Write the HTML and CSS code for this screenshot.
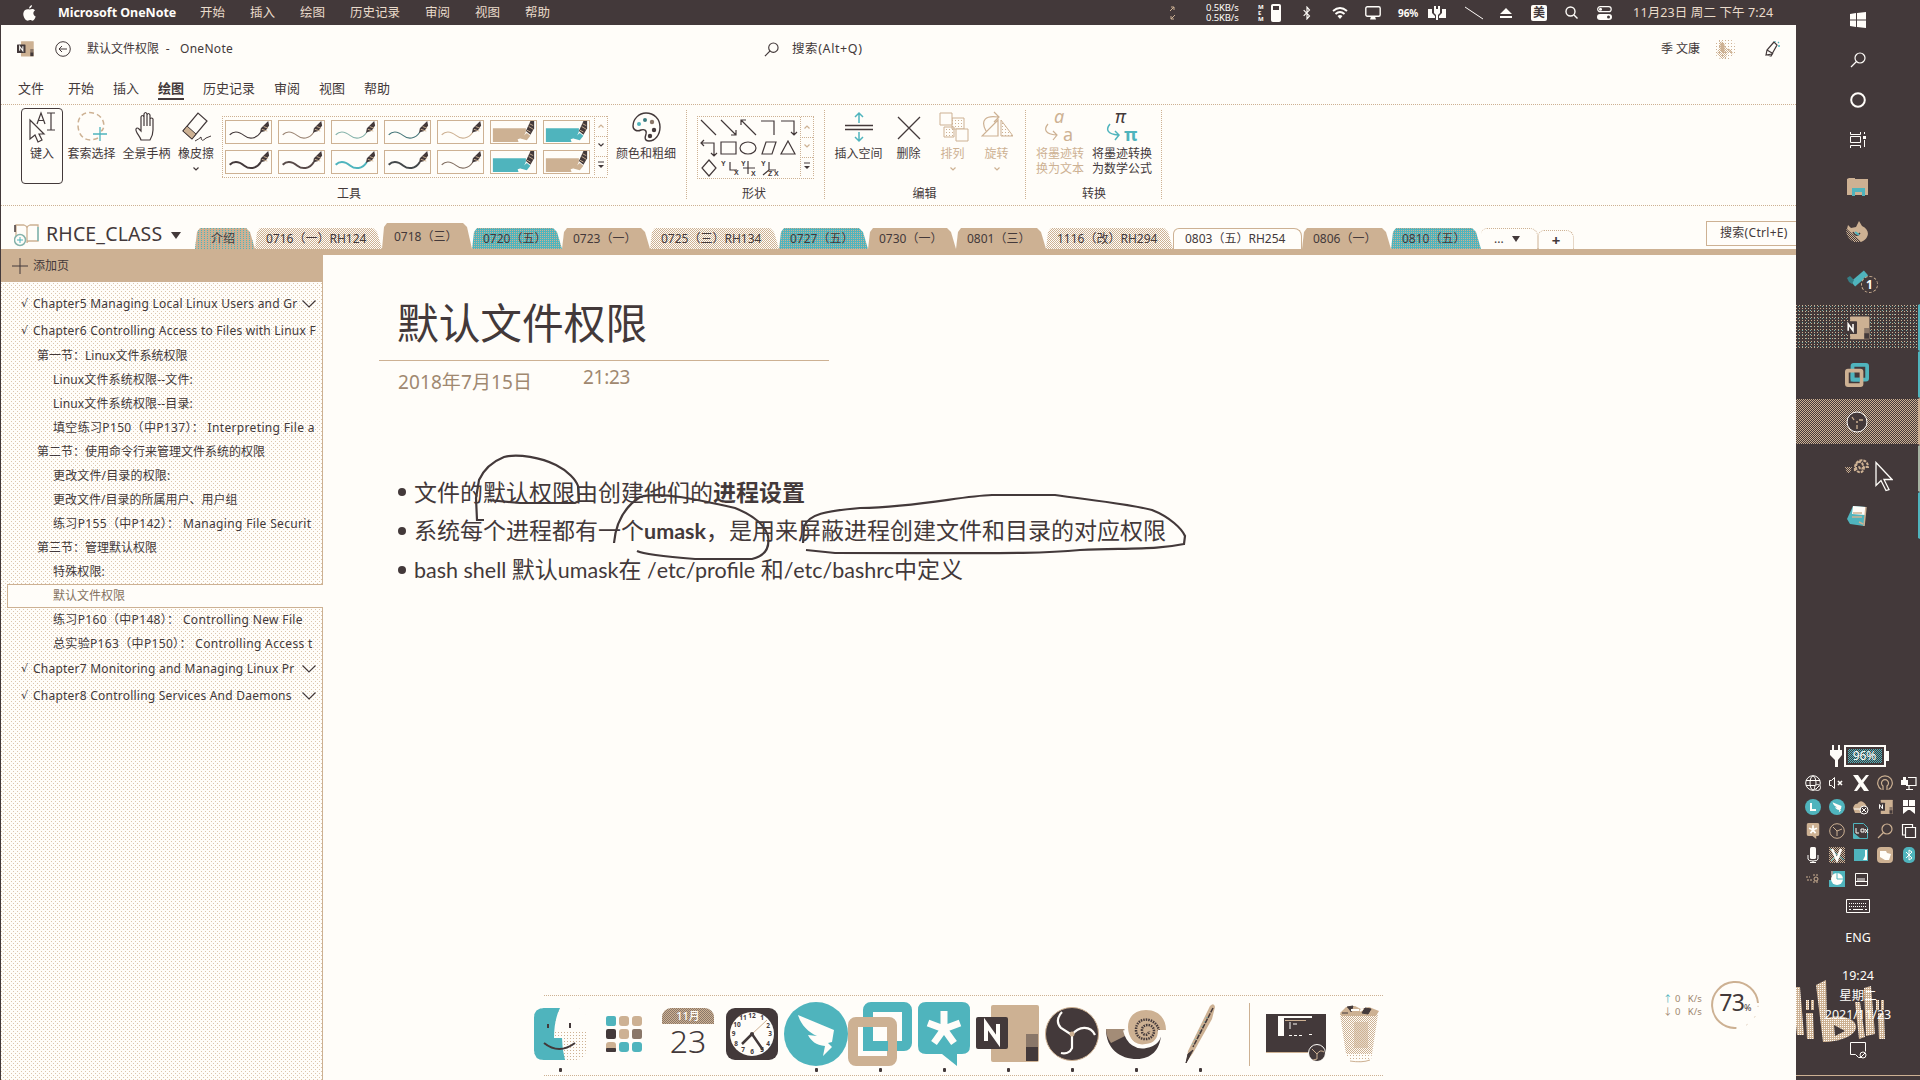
FILE: index.html
```html
<!DOCTYPE html>
<html lang="zh-CN">
<head>
<meta charset="utf-8">
<title>默认文件权限 - OneNote</title>
<link rel="stylesheet" href="styles.css">
</head>
<body>
<svg class="defs" aria-hidden="true">
  <defs>
    <pattern id="dither-tan" width="2" height="2" patternUnits="userSpaceOnUse"><rect width="1" height="1" fill="#cdb193"/><rect x="1" y="1" width="1" height="1" fill="#cdb193"/></pattern>
    <pattern id="dither-light" width="3" height="3" patternUnits="userSpaceOnUse"><rect width="1" height="1" fill="#cdb193"/></pattern>
    <pattern id="dither-bright" width="2" height="2" patternUnits="userSpaceOnUse"><rect width="2" height="2" fill="#cdb193"/><rect width="1" height="1" fill="#fffdf9"/></pattern>
    <symbol id="stroke-thin" viewBox="0 0 47 24"><path d="M3 15C8 10 14 12 19 16S32 20 37 12" fill="none" stroke="currentColor" stroke-width="1.2"/><path d="M36 13l1-5 8-8 1 5-4 6-4 1z" fill="#43393a"/><path d="M38 9l6 2M40 6l5 2" stroke="#cdb193"/></symbol>
    <symbol id="stroke-thick" viewBox="0 0 47 24"><path d="M3 15C8 10 14 12 19 16S32 20 37 12" fill="none" stroke="currentColor" stroke-width="2.2"/><path d="M36 13l1-5 8-8 1 5-4 6-4 1z" fill="#43393a"/><path d="M38 9l6 2M40 6l5 2" stroke="#cdb193"/></symbol>
    <symbol id="marker" viewBox="0 0 47 24"><path d="M1 8h36v15H1z" fill="currentColor"/><path d="M28 20l6-2 3-6 5 4-3 7H29z" fill="#fffdf9"/><path d="M31 19l7-6 4 3-4 5z" fill="currentColor"/><path d="M37 11l5-11h4v8l-4 7z" fill="#43393a"/><path d="M40 6l5 3M38 10l4 2M41 3l4 2" stroke="#cdb193"/></symbol>
    <symbol id="chev" viewBox="0 0 8 6"><path d="M1.500 1.500L4 4l2.500-2.500" fill="none" stroke="currentColor" stroke-width="1.200"/></symbol>
    <symbol id="more" viewBox="0 0 8 8"><path d="M1 1h6" stroke="currentColor"/><path d="M1 4h6L4 7z" fill="currentColor"/></symbol>
    <symbol id="onenote" viewBox="0 0 64 60"><rect x="15" y="1" width="48" height="57" rx="2" fill="#cdb193"/><rect x="50" y="30" width="12" height="14" fill="#8a7769"/><rect x="50" y="43" width="12" height="14" fill="#43393a"/><rect y="13" width="32" height="32" rx="2" fill="#43393a"/><path d="M10 37V20l12 17V20" fill="none" stroke="#fffdf9" stroke-width="4"/></symbol>
    <symbol id="obs" viewBox="0 0 54 54"><circle cx="27" cy="27" r="26.500" fill="#43393a" stroke="#cdb193"/><g fill="none" stroke="#fffdf9" stroke-width="2.200"><path d="M27 28L16 21C10 15 14 8 17 5"/><path d="M27 28L27 41C25 46 20 47 16 46"/><path d="M27 28C34 18 46 19 50 28"/></g><circle cx="27" cy="27" r="2.500" fill="#cdb193"/></symbol>
    <symbol id="vm" viewBox="0 0 64 64"><g fill="none" stroke-width="10"><rect x="20" y="5" width="39" height="39" rx="3" stroke="#4fb4bd"/><rect x="5" y="20" width="39" height="39" rx="3" stroke="#cdb193"/><path d="M20 27v17h20" stroke="#4fb4bd"/></g></symbol>
    <symbol id="shell" viewBox="0 0 60 50"><path d="M0 20h18l4 8c10 16 26 12 33-2-1 15-10 24-24 24C14 50 0 40 0 20z" fill="#43393a"/><path d="M0 20h18l1 7L5 34C2 30 0 25 0 20z" fill="#a38c77"/><path d="M22 18C22 7 30 1 40 1c13 0 20 9 20 20h-6c0 11-8 16-15 16-10 0-17-8-17-19z" fill="#cdb193"/><path d="M53 22c-2-14-23-16-23-1 0 12 18 12 18 1 0-8-13-8-12 0 0 5 7 5 7 0" fill="none" stroke="#43393a" stroke-width="2.500" stroke-dasharray="1.500 1"/><path d="M19 21c3 13 12 18 21 16 9-1 14-7 14-16" fill="none" stroke="#fffdf9" stroke-width="4"/></symbol>
    <symbol id="bird" viewBox="0 0 64 64"><circle cx="32" cy="32" r="32" fill="#4fb4bd"/><path d="M14 13l36 15-2 12-4 1 4 4-9 9 2-10c-9-1-14-5-17-11l9 1c-9-4-16-11-19-21z" fill="#fffdf9"/></symbol>
    <symbol id="asterisk" viewBox="0 0 52 64"><path d="M8 0h36q8 0 8 8v36q0 8-8 8h-5v12L24 52H8q-8 0-8-8V8q0-8 8-8z" fill="currentColor"/><path d="M26 9v18M26 27L10 21M26 27l16-6M26 27L16 41M26 27l10 14" stroke="#fffdf9" stroke-width="7"/></symbol>
    <symbol id="search" viewBox="0 0 16 16"><circle cx="10" cy="6" r="5" fill="none" stroke="currentColor" stroke-width="1.200"/><path d="M6.500 9.500L1 15" stroke="currentColor" stroke-width="1.300"/></symbol>
    <symbol id="bt" viewBox="0 0 12 16"><path d="M2 4.500l7 7L6 15V1l3 3.500-7 7" fill="none" stroke="currentColor" stroke-width="1.400"/></symbol>
  </defs>
</svg>
<div class="desktop">
  <main class="screen">
    <header class="menubar">
      <svg class="apple" viewBox="0 0 13 16"><path d="M9 0c0 2-1.500 3.500-3 3.500C6 2 7.500.4 9 0zM6.700 4.500C8 4 10.500 3.300 12 5.500c-2.500 1.600-2 4.800.7 6C11.500 15 10 16 8.800 15.600c-1.500-.7-2.300-.6-3.600 0C3 16.500 0 12 .3 8.500.6 5 3.500 3.500 6.700 4.500z" fill="currentColor"/></svg>
      <b class="app-name">Microsoft OneNote</b>
      <nav class="app-menu"><span>开始</span><span>插入</span><span>绘图</span><span>历史记录</span><span>审阅</span><span>视图</span><span>帮助</span></nav>
      <div class="status">
        <svg class="s-arrows" width="8" height="16"><path d="M1 6l4-4M2 2h3v3M6 10l-4 4M5 14H2v-3" fill="none" stroke="#cdb193"/></svg>
        <div class="s-speed"><span>0.5KB/s</span><span>0.5KB/s</span></div>
        <div class="s-mem"><i>M</i><i>E</i><i>M</i></div>
        <svg class="s-level" width="10" height="18"><rect x=".5" y=".5" width="9" height="17" rx="1" fill="#fffdf9" stroke="#fffdf9"/><path d="M2 2h6v4H2z" fill="#43393a"/></svg>
        <svg class="s-bt" width="10" height="14"><use href="#bt"/></svg>
        <svg class="s-wifi" width="16" height="12" viewBox="0 0 16 12"><path d="M1 4q7-6 14 0M3.500 7q4.500-4 9 0" fill="none" stroke="currentColor" stroke-width="1.900"/><path d="M8 12L5.500 9q2.500-2 5 0z" fill="currentColor"/></svg>
        <svg class="s-display" width="16" height="14" viewBox="0 0 16 14"><rect x=".8" y=".8" width="14.400" height="9.500" rx="1.500" fill="none" stroke="currentColor" stroke-width="1.400"/><path d="M5 13.500l1-3h4l1 3z" fill="currentColor"/></svg>
        <b class="s-percent">96%</b>
        <svg class="s-plug" width="18" height="14" viewBox="0 0 18 14"><path d="M0 3h4v4l3 3v2H0zM18 3h-4v4l-3 3v2h7z" fill="currentColor"/><path d="M6 0h2v3h2V0h2v7l-2 2v5H8V9L6 7z" fill="currentColor"/></svg>
        <svg class="s-line" width="18" height="14"><path d="M0 1l18 12" stroke="currentColor"/></svg>
        <svg class="s-eject" width="12" height="10"><path d="M6 0l6 6H0zM0 8h12v2H0z" fill="currentColor"/></svg>
        <b class="s-input">美</b>
        <svg class="s-search" width="13" height="13" viewBox="0 0 13 13"><circle cx="5.500" cy="5.500" r="4.500" fill="none" stroke="currentColor" stroke-width="1.400"/><path d="M9 9l3.500 3.500" stroke="currentColor" stroke-width="1.400"/></svg>
        <svg class="s-toggle" width="15" height="14" viewBox="0 0 15 14"><rect x=".7" y=".7" width="13.500" height="5" rx="2.500" fill="none" stroke="currentColor" stroke-width="1.200"/><circle cx="3.500" cy="3.200" r="1.500" fill="currentColor"/><rect y="8" width="15" height="6" rx="3" fill="currentColor"/><circle cx="11.500" cy="11" r="1.500" fill="#43393a"/></svg>
        <span class="s-date">11月23日 周二 下午 7:24</span>
      </div>
    </header>

    <section class="window">
      <div class="titlebar">
        <svg class="app-icon" viewBox="0 0 64 60"><use href="#onenote"/></svg>
        <svg class="back" viewBox="0 0 16 16"><circle cx="8" cy="8" r="7.300" fill="none" stroke="currentColor"/><path d="M12 8H4M7 5L4 8l3 3" fill="none" stroke="currentColor"/></svg>
        <span class="doc-name">默认文件权限 &nbsp;-&nbsp;&nbsp; <span class="product">OneNote</span></span>
        <div class="find"><svg width="15" height="15"><use href="#search"/></svg><span>搜索(Alt+Q)</span></div>
        <span class="user">季 文康</span>
        <svg class="avatar" viewBox="0 0 24 24"><circle cx="12" cy="12" r="11" fill="url(#dither-light)"/><path d="M6 4l5 1 1 5 6 3 3 5-6-3-2 6-5 1-4-6 2-5z" fill="url(#dither-tan)"/><path d="M8 6l3 2v8l-3-3zM14 12l5 4" fill="#cdb193" stroke="#cdb193"/></svg>
        <svg class="pen-tip" viewBox="0 0 18 18"><path d="M3 15l1-5 7-8 3 3-5 9zM4 10l5 3M4 15l4 1 2-3" fill="none" stroke="currentColor" stroke-width="1.200"/><path d="M12 1v1M15 3l1-1M15 6h2" stroke="#4fb4bd" stroke-width="1.300"/></svg>
      </div>
      <nav class="ribbon-tabs"><span>文件</span><span>开始</span><span>插入</span><b>绘图</b><span>历史记录</span><span>审阅</span><span>视图</span><span>帮助</span></nav>

      <div class="ribbon">
        <div class="group g-tools">
          <div class="group-body">
            <div class="tool selected"><svg viewBox="0 0 32 32"><path d="M4 9v19l5-4 3 7 4-2-3-6h5zM11 13l4-11 4 11M12.500 9.500h5M21 2h8M21 19h8M25 2v17" fill="none" stroke="currentColor" stroke-width="1.200"/></svg><span>键入</span></div>
            <div class="tool t-lasso"><svg viewBox="0 0 32 32"><path d="M22 27C9 33 2 24 2 14S10-1 20 3s9 16 5 17" fill="none" stroke="#cdb193" stroke-width="1.500" stroke-dasharray="5 3"/><path d="M24 16v14M17 23h14" stroke="#4fb4bd" stroke-width="1.300"/></svg><span>套索选择</span></div>
            <div class="tool t-hand"><svg viewBox="0 0 32 32"><path d="M10 29c-1-4-6-8-5-11q1-2 3 0l2 2V6q1-3 3 0v9V3q1.500-3 3 0v12V4q1.500-3 3 0v11V8q1.500-2 3 0v11c0 4-1 7-3 10z" fill="none" stroke="currentColor" stroke-width="1.200"/></svg><span>全景手柄</span></div>
            <div class="tool t-eraser"><svg viewBox="0 0 32 32"><path d="M3 20L18 2l9 8-15 18z" fill="none" stroke="currentColor" stroke-width="1.200"/><path d="M3 20l4-5 9 8-4 5z" fill="#cdb193" stroke="#43393a"/><path d="M15 30q4-2 6-4 0 6 5 1l5-2" fill="none" stroke="currentColor"/></svg><span>橡皮擦</span><svg class="mini"><use href="#chev"/></svg></div>
            <div class="gallery">
              <div class="pens">
                <svg class="pen"><use href="#stroke-thin"/></svg><svg class="pen"><use href="#stroke-thin" color="#9c8675"/></svg><svg class="pen"><use href="#stroke-thin" color="#86b3ab"/></svg><svg class="pen"><use href="#stroke-thin" color="#47777a"/></svg><svg class="pen"><use href="#stroke-thin" color="#cdb193"/></svg><svg class="pen"><use href="#marker" color="#cdb193"/></svg><svg class="pen"><use href="#marker" color="#4fb4bd"/></svg>
                <svg class="pen"><use href="#stroke-thick"/></svg><svg class="pen"><use href="#stroke-thick" color="#584a48"/></svg><svg class="pen"><use href="#stroke-thick" color="#4fb4bd"/></svg><svg class="pen"><use href="#stroke-thick" color="#44484a"/></svg><svg class="pen"><use href="#stroke-thin" color="#826f62"/></svg><svg class="pen"><use href="#marker" color="#4fb4bd"/></svg><svg class="pen"><use href="#marker" color="#cdb193"/></svg>
              </div>
              <div class="scroller"><svg class="up dim"><use href="#chev"/></svg><svg><use href="#chev"/></svg><svg class="m"><use href="#more"/></svg></div>
            </div>
            <div class="tool t-color"><svg viewBox="0 0 32 32"><path d="M16 2c8 0 14 6 14 14s-5 14-11 14c-5 0-4-4-3-7 1-4-2-5-5-4-4 2-8 0-8-4C3 8 9 2 16 2z" fill="none" stroke="currentColor" stroke-width="1.400"/><circle cx="9" cy="13" r="2" fill="#4fb4bd"/><circle cx="15" cy="9" r="2" fill="#3b7b80"/><circle cx="22" cy="11" r="2.200" fill="#8a7769"/><circle cx="24" cy="19" r="2.200" fill="#43393a"/><circle cx="20" cy="25" r="2.200" fill="#43393a"/></svg><span>颜色和粗细</span></div>
          </div>
          <div class="group-name">工具</div>
        </div>
        <div class="group g-shapes">
          <div class="group-body">
            <div class="shape-box">
              <svg class="shapes" viewBox="0 0 102 62"><g fill="none" stroke="currentColor" stroke-width="1.200"><path d="M4 4l15 15M24 4l15 15M34 19h5v-5M44 4l15 15M44 9V4h5M64 5h13v14M84 5h13v14M94 16l3 3 3-3M4 27h13v13M7 24l-3 3 3 3M14 37l3 3 3-3"/><path d="M24 26h15v12H24zM65 38l4-12h10l-4 12zM91 25l7 13H84zM12 44l7 8-7 8-7-8z"/><ellipse cx="51" cy="32" rx="8" ry="6"/><path d="M33 46v8h7M51 45v13M46 52h12M72 46v8h7M72 54l-6 5"/></g><g class="axis" fill="currentColor"><text x="24" y="50">Y</text><text x="37" y="59">X</text><text x="44" y="50">Y</text><text x="54" y="60">X</text><text x="64" y="50">Y</text><text x="71" y="60">Z</text><text x="77" y="60">X</text></g></svg>
              <div class="scroller"><svg class="up dim"><use href="#chev"/></svg><svg class="dim"><use href="#chev"/></svg><svg class="m"><use href="#more"/></svg></div>
            </div>
          </div>
          <div class="group-name">形状</div>
        </div>
        <div class="group g-edit">
          <div class="group-body">
            <div class="tool"><svg viewBox="0 0 32 32"><path d="M2 14.500h28M2 18.500h28" stroke="currentColor" stroke-width="1.500"/><path d="M16 12V2M12 6l4-4 4 4M16 21v9M12 26l4 4 4-4" fill="none" stroke="#4fb4bd" stroke-width="1.500"/></svg><span>插入空间</span></div>
            <div class="tool"><svg viewBox="0 0 32 32"><path d="M5 6l22 22M27 6L5 28" stroke="currentColor" stroke-width="1.300"/></svg><span>删除</span></div>
            <div class="tool dim"><svg viewBox="0 0 32 32"><path d="M15 7h12v11H15zM7 16h10v10H7z" fill="url(#dither-light)" stroke="currentColor"/><path d="M3 2h12v12H3zM19 18h12v12H19z" fill="#fffdf9" stroke="currentColor"/></svg><span>排列</span><svg class="mini"><use href="#chev"/></svg></div>
            <div class="tool dim"><svg viewBox="0 0 32 32"><path d="M5 20C-1 9 5 4 17 6M13 1l5 5-5 5M1 25h16V9z" fill="none" stroke="currentColor" stroke-width="1.200"/><path d="M20 9l12 16H20z" fill="url(#dither-light)" stroke="currentColor"/></svg><span>旋转</span><svg class="mini"><use href="#chev"/></svg></div>
          </div>
          <div class="group-name">编辑</div>
        </div>
        <div class="group g-convert">
          <div class="group-body">
            <div class="tool dim"><svg viewBox="0 0 32 32"><path d="M4 13c-5 6-2 10 8 11M9 20l4 4-4 5" fill="none" stroke="currentColor" stroke-width="1.200"/><text x="10" y="12" font-size="18" font-style="italic" fill="currentColor">a</text><text x="19" y="30" font-size="18" fill="currentColor">a</text></svg><span>将墨迹转<br>换为文本</span></div>
            <div class="tool"><svg viewBox="0 0 32 32"><path d="M4 13c-5 6-2 10 8 11M9 20l4 4-4 5" fill="none" stroke="#4fb4bd" stroke-width="1.500"/><text x="9" y="12" font-size="18" font-style="italic" fill="currentColor">π</text><text x="18" y="30" font-size="18" font-weight="bold" fill="#4fb4bd">π</text></svg><span>将墨迹转换<br>为数学公式</span></div>
          </div>
          <div class="group-name">转换</div>
        </div>
      </div>

      <div class="notebook-bar">
        <svg class="nb-icon" viewBox="0 0 26 24"><path d="M2 18V2h8q3 1 3 3 0-2 3-3h8v16h-9q-2 0-2 2M13 5v14" fill="none" stroke="#cdb193" stroke-width="1.300"/><path d="M24 4v14" stroke="#4fb4bd"/><path d="M1 2v7" stroke="#43393a" stroke-width="1.500"/><circle cx="6" cy="17" r="5.500" fill="#fffdf9" stroke="#86b3ab" stroke-width="1.500"/><path d="M6 14v6M3 17h6" stroke="#4fb4bd"/></svg>
        <span class="nb-name">RHCE_CLASS</span>
        <svg class="nb-arrow" viewBox="0 0 10 7"><path d="M0 0h10L5 7z" fill="currentColor"/></svg>
        <div class="tabs">
          <div class="tab mix w60">介绍</div>
          <div class="tab pale w127">0716（一）RH124</div>
          <div class="tab tan active w90">0718（三）</div>
          <div class="tab teal w90">0720（五）</div>
          <div class="tab tan w88">0723（一）</div>
          <div class="tab pale w129">0725（三）RH134</div>
          <div class="tab teal w89">0727（五）</div>
          <div class="tab tan w88">0730（一）</div>
          <div class="tab tan w90">0801（三）</div>
          <div class="tab pale w127">1116（改）RH294</div>
          <div class="tab open w129">0803（五）RH254</div>
          <div class="tab tan w89">0806（一）</div>
          <div class="tab teal w90">0810（五）</div>
          <div class="tab open more">... <svg viewBox="0 0 8 6"><path d="M0 0h8L4 6z" fill="currentColor"/></svg></div>
          <div class="tab open plus">+</div>
        </div>
        <div class="nb-search">搜索(Ctrl+E)</div>
      </div>

      <div class="content">
        <aside class="pages">
          <div class="add-page"><svg viewBox="0 0 16 16"><path d="M0 8h16M8 0v16" stroke="currentColor"/></svg>添加页</div>
          <ul>
            <li class="ch first"><i>√</i>Chapter5 Managing Local Linux Users and Gr<svg viewBox="0 0 14 8"><path d="M.5.5L7 7l6.500-6.500" fill="none" stroke="currentColor" stroke-width="1.200"/></svg></li>
            <li class="ch"><i>√</i>Chapter6 Controlling Access to Files with Linux F</li>
            <li class="l1">第一节：Linux文件系统权限</li>
            <li class="mixed">Linux文件系统权限--文件:</li>
            <li class="mixed">Linux文件系统权限--目录:</li>
            <li class="exercise">填空练习P150（中P137）： Interpreting File a</li>
            <li class="l1">第二节：使用命令行来管理文件系统的权限</li>
            <li class="mixed">更改文件/目录的权限:</li>
            <li>更改文件/目录的所属用户、用户组</li>
            <li class="exercise">练习P155（中P142）： Managing File Securit</li>
            <li class="l1">第三节：管理默认权限</li>
            <li class="mixed">特殊权限:</li>
            <li class="current">默认文件权限</li>
            <li class="exercise">练习P160（中P148）： Controlling New File</li>
            <li class="exercise">总实验P163（中P150）： Controlling Access t</li>
            <li class="ch"><i>√</i>Chapter7 Monitoring and Managing Linux Pr<svg viewBox="0 0 14 8"><path d="M.5.5L7 7l6.500-6.500" fill="none" stroke="currentColor" stroke-width="1.200"/></svg></li>
            <li class="ch last"><i>√</i>Chapter8 Controlling Services And Daemons<svg viewBox="0 0 14 8"><path d="M.5.5L7 7l6.500-6.500" fill="none" stroke="currentColor" stroke-width="1.200"/></svg></li>
          </ul>
        </aside>
        <article class="page">
          <h1>默认文件权限</h1>
          <div class="stamp"><span class="date">2018年7月15日</span><span class="time">21:23</span></div>
          <ul class="notes">
            <li><span>文件的默认权限由创建他们的<b>进程设置</b></span></li>
            <li><span>系统每个进程都有一个<b class="latin">umask</b>，是用来屏蔽进程创建文件和目录的对应权限</span></li>
            <li><span><span class="latin">bash shell </span>默认<span class="latin">umask</span>在<span class="latin"> /etc/profile </span>和<span class="latin">/etc/bashrc</span>中定义</span></li>
          </ul>
          <svg class="ink" viewBox="470 450 724 116"><path d="M484 520h-7l-1-22 3-18c5-11 15-19 25-23 14-4 38 1 52 8 12 6 20 15 22 21l1 15-4 2h-55l-32-3M614 543c2-22 12-37 26-46 20-6 60 3 95 11 20 8 30 18 33 28 2 12-3 20-16 23h-57c-25-2-50-4-58-8M803 543l1-16c4-13 22-16 56-19 60-1 100-12 132-13h63c35 5 75 9 97 15 18 7 30 19 33 26l-1 8c-24 5-44 4-104 6-40 4-80 3-245 3l-29-3" fill="none" stroke="currentColor" stroke-width="2.200"/></svg>
        </article>
      </div>
    </section>

    <div class="netmon">
      <div class="rates"><span><i>↑</i> 0 &nbsp; K/s</span><span><i>↓</i> 0 &nbsp; K/s</span></div>
      <div class="load"><svg viewBox="0 0 48 48"><path d="M47 22A23 23 0 1 0 25 47" fill="none" stroke="#cdb193" stroke-width="2"/><path d="M25 47A23 23 0 0 0 47 22" fill="none" stroke="#cdb193" stroke-dasharray="1 10"/></svg><span>73<small>%</small></span></div>
    </div>

    <footer class="dock">
      <div class="app on"><svg width="52" height="52"><rect width="52" height="52" rx="10" fill="url(#dither-light)"/><path d="M26 0h18q8 0 8 8v16H20Q21 10 26 0z" fill="#fffdf9"/><path d="M26 0H10Q0 0 0 10v32q0 10 10 10h21q-3-11-3-22h-8Q20 12 26 0z" fill="#4fb4bd"/><path d="M14 16v4M36 15v5M10 35q15 12 31 0" fill="none" stroke="#43393a" stroke-width="2"/></svg></div>
      <div class="app"><svg width="36" height="36"><g fill="#cdb193"><rect x="13" width="10" height="10" rx="3"/><rect x="26" width="10" height="10" rx="3"/><rect x="13" y="13" width="10" height="10" rx="3"/><rect y="26" width="10" height="10" rx="3"/></g><g fill="#43393a"><rect y="13" width="10" height="10" rx="2"/><rect x="26" y="13" width="10" height="10" rx="2" fill="#8a7769"/><rect y="32" width="10" height="4" rx="1"/></g><g fill="#4fb4bd"><rect width="10" height="10" rx="2"/><rect x="13" y="26" width="10" height="10" rx="3"/><rect x="26" y="26" width="10" height="10" rx="3"/></g></svg></div>
      <div class="app"><div class="calendar"><b>11月</b><span>23</span></div></div>
      <div class="app"><svg width="52" height="52"><rect width="52" height="52" rx="9" fill="#43393a"/><circle cx="26" cy="26" r="22" fill="#fffdf9"/><g font-size="6.500" font-weight="bold" fill="#43393a" text-anchor="middle"><text x="26" y="10">12</text><text x="36" y="12">1</text><text x="42" y="20">2</text><text x="44" y="28">3</text><text x="42" y="38">4</text><text x="36" y="44">5</text><text x="26" y="46">6</text><text x="17" y="44">7</text><text x="10" y="38">8</text><text x="7.500" y="28">9</text><text x="11" y="19">10</text><text x="17" y="12">11</text></g><path d="M26 26L16 36M26 26l11 16" stroke="#43393a" stroke-width="2.500"/><path d="M26 26l15-14" stroke="#cdb193"/><circle cx="26" cy="26" r="2" fill="#43393a"/></svg></div>
      <div class="app on"><svg width="64" height="64"><use href="#bird"/></svg></div>
      <div class="app on"><svg width="64" height="64"><use href="#vm"/></svg></div>
      <div class="app on"><svg width="52" height="64" color="#4fb4bd"><use href="#asterisk"/></svg></div>
      <div class="app on"><svg width="64" height="60"><use href="#onenote"/></svg></div>
      <div class="app on"><svg width="54" height="54"><use href="#obs"/></svg></div>
      <div class="app on"><svg width="60" height="50"><use href="#shell"/></svg></div>
      <div class="app on"><svg width="32" height="62" viewBox="0 0 32 62"><path d="M2 60l2-12L26 3q4-4 5 1l-3 12L9 50z" fill="#cdb193"/><path d="M29 5L9 44" stroke="#43393a" stroke-width="1.500" stroke-dasharray="5 1"/><path d="M9 47l-7 13 2-9z" fill="#43393a" stroke="#43393a"/><path d="M23 14L8 42" stroke="#4fb4bd" stroke-dasharray="1 4"/></svg></div>
      <i class="divider"></i>
      <div class="app"><svg width="60" height="56" viewBox="0 0 60 56"><path d="M0 8h60v38H0z" fill="#43393a"/><path d="M0 46.500h60" stroke="#cdb193"/><path d="M12 10h34v2H18v18h-6z" fill="#fffdf9"/><path d="M19 14.500h21" stroke="#cdb193"/><path d="M24 16v7M27 18h4" stroke="#fffdf9"/><path d="M23 29.500h14M43 28.500h3" stroke="#fffdf9" stroke-dasharray="3 2"/><circle cx="51" cy="47" r="8.500" fill="#43393a" stroke="#fffdf9"/><path d="M51 48l-5-5M51 48v5l-4 1M51 48q3-5 7-2" fill="none" stroke="#cdb193"/></svg></div>
      <div class="app"><svg width="44" height="60" viewBox="0 0 44 60"><path d="M2 10h38l-6 40H8z" fill="url(#dither-tan)"/><path d="M8 50h26l-1 6q-11 3-22 0z" fill="url(#dither-light)"/><path d="M16 18h14v26H16z" fill="#cdb193" opacity=".5"/><path d="M2 9l6-6 9-1 6 3 8-2 10 4-3 5H4z" fill="#cdb193"/><path d="M9 3l6-1-2 6M24 9l3-5 6 1-3 5zM4 9h6" fill="#43393a" stroke="#43393a"/><path d="M13 6h8M22 7l3-2" stroke="#fffdf9" stroke-width="2"/><path d="M12 57q12 2 20-1" fill="none" stroke="#cdb193"/></svg></div>
    </footer>
  </main>

  <aside class="taskbar">
    <div class="launch">
      <div class="sys"><svg width="16" height="16"><path d="M0 2l6-1v6.500H0zM7 1l9-1v7.500H7zM0 8.500h6V15l-6-1zM7 8.500h9V16l-9-1z" fill="currentColor"/></svg></div>
      <div class="sys"><svg width="16" height="16"><use href="#search"/></svg></div>
      <div class="sys"><svg width="16" height="16"><circle cx="8" cy="8" r="6.800" fill="none" stroke="currentColor" stroke-width="2"/></svg></div>
      <div class="sys"><svg width="16" height="16"><path d="M.5 0v2.500h10V0M.5 16v-2.500h10V16M.5 4.500h10v6H.5zM14.500 0v2M14.500 8v7" fill="none" stroke="currentColor"/><path d="M13 4h3v3h-3z" fill="currentColor"/></svg></div>
    </div>
    <div class="task"><svg width="21" height="18"><path d="M0 1l2-1h6v1h13v16H0z" fill="#cdb193"/><path d="M5 18v-8h13v8h-3v-4H8v4z" fill="#4fb4bd"/></svg></div>
    <div class="task ff"><svg width="22" height="22"><path d="M1 8l1-4 3 3 5-1 3-6 3 5c9 4 7 13-1 16z" fill="#cdb193"/><path d="M0 8l15 13H8C2 18 0 13 0 8z" fill="url(#dither-tan)"/><path d="M7 11q3 6 7 1" fill="none" stroke="#43393a" stroke-width="1.500"/><path d="M9 11l4 3" stroke="#4fb4bd" stroke-width="2"/></svg></div>
    <div class="task"><svg width="22" height="22"><path d="M7 14L20 3" stroke="#4fb4bd" stroke-width="6.500"/><path d="M1 8l3-2 4 4-2 4-3-2z" fill="#367e85"/></svg><b class="badge">1</b></div>
    <div class="task lit run-teal"><svg width="26" height="24"><use href="#onenote"/></svg></div>
    <div class="task run-teal"><svg width="24" height="24"><use href="#vm"/></svg></div>
    <div class="task hover run-tan"><svg width="22" height="22"><circle cx="11" cy="11" r="10" fill="#43393a" stroke="#fffdf9"/><circle cx="11" cy="11" r="1" fill="#cdb193"/><path d="M6 6l2 3M13 9h4M11 14v4" stroke="#cdb193" stroke-width="1.300"/></svg></div>
    <div class="task run-mix"><svg width="24" height="20"><path d="M0 8h7l-2 6H2z" fill="url(#dither-tan)"/><path d="M10 12C8-1 23-2 23 8h-4c0 7-8 7-8 0s7-6 7-1-4 3-4 0" fill="none" stroke="#cdb193" stroke-width="2" stroke-dasharray="3 1"/></svg></div>
    <div class="task run-teal"><svg width="22" height="22"><path d="M7 1l13 1-2 19-14-2L1 14z" fill="#4fb4bd"/><path d="M7 1l13 1-1 8-13-1z" fill="#fffdf9"/><path d="M20 2l-2 19M7 8h9M6 12h10M13 17l4 2" stroke="#cdb193" stroke-width="1.500"/></svg></div>
    <svg class="cursor" viewBox="0 0 18 30"><path d="M1 1v23l5-5 5 10 3-1-5-10h8z" fill="#43393a" stroke="#fffdf9" stroke-width="1.300"/></svg>

    <div class="power"><svg width="12" height="22"><path d="M3 0v5M9 0v5" stroke="currentColor" stroke-width="2"/><path d="M0 5h12v5l-4 5v7H5v-7l-5-5z" fill="currentColor"/></svg><div class="battery">96%</div><i></i></div>
    <div class="tray">
      <svg viewBox="0 0 16 16"><circle cx="8" cy="8" r="7.300" fill="none" stroke="currentColor"/><ellipse cx="8" cy="8" rx="3" ry="7" fill="none" stroke="currentColor"/><path d="M1 5.500h14M1 10.500h9" stroke="currentColor"/><circle cx="12.500" cy="12.500" r="3" fill="#43393a" stroke="#fffdf9"/><path d="M11 14l3-3" stroke="currentColor"/></svg>
      <svg viewBox="0 0 16 16"><path d="M.5 5.500h2l3-3v11l-3-3h-2z" fill="none" stroke="currentColor"/><path d="M9 6l4 4M13 6l-4 4" stroke="currentColor" stroke-width="1.600"/></svg>
      <svg viewBox="0 0 16 16"><path d="M0 0h5l11 16h-5z" fill="currentColor"/><path d="M13 0h3l-6 8-2-2zM1 16l5-8 2 3-4 5z" fill="currentColor"/></svg>
      <svg viewBox="0 0 16 16"><path d="M4.500 14.500a7.300 7.300 0 1 1 7 0M6 15v-4a3.500 3.500 0 1 1 4 0v4" fill="none" stroke="#cdb193" stroke-width="1.200"/></svg>
      <svg viewBox="0 0 16 16"><path d="M7 2.500h8v8H5M8 11v3M5 14.500h7" fill="none" stroke="currentColor" stroke-width="1.200"/><path d="M0 5h7v5H0zM2 5V2h3v3" fill="currentColor"/></svg>
      <svg viewBox="0 0 16 16"><circle cx="8" cy="8" r="8" fill="#4fb4bd"/><path d="M6 4v7h5" fill="none" stroke="#fffdf9" stroke-width="2"/></svg>
      <svg viewBox="0 0 64 64"><use href="#bird"/></svg>
      <svg viewBox="0 0 16 16"><path d="M0 9q2-5 4-4 4-6 9 1l1 4-4 4H2z" fill="#cdb193"/><circle cx="11" cy="11" r="4" fill="#43393a" stroke="#fffdf9"/><path d="M1 10h7M9 9l4 4M13 9l-4 4" stroke="#fffdf9"/></svg>
      <svg viewBox="0 0 64 60"><use href="#onenote"/></svg>
      <svg viewBox="0 0 16 16"><path d="M2 1h5v6H2zM8 1h6v6H8zM2 8h12v7l-5-4h-2l-5 4z" fill="currentColor"/></svg>
      <svg viewBox="0 0 52 64" color="#cdb193"><use href="#asterisk"/></svg>
      <svg viewBox="0 0 16 16"><circle cx="8" cy="8" r="7.300" fill="none" stroke="#cdb193"/><path d="M8 8L4 4M8 8v5M8 8l5-2" stroke="#cdb193"/></svg>
      <svg viewBox="0 0 16 16"><path d="M.5.500h10l4 4v11H.5z" fill="#43393a" stroke="#4fb4bd"/><path d="M1 10l6 5H1z" fill="#4fb4bd"/><path d="M3 5v5h3M8 6h3v3H8zM12 6l3 4M15 6l-3 4" fill="none" stroke="#fffdf9"/></svg>
      <svg viewBox="0 0 16 16" color="#cdb193"><use href="#search"/></svg>
      <svg viewBox="0 0 16 16"><path d="M4 12H1.500V1.500h10V4M4.500 4.500h10v10h-10z" fill="none" stroke="currentColor" stroke-width="1.200"/></svg>
      <svg viewBox="0 0 16 16"><rect x="5" width="6" height="12" rx="1.500" fill="currentColor"/><path d="M3 8v4q0 2 5 2t5-2V8M8 14v2M5 15.500h6" fill="none" stroke="currentColor"/></svg>
      <svg viewBox="0 0 16 16"><path d="M0 0h16v16H0z" fill="url(#dither-tan)"/><path d="M1 2l14 11M2 14l5-5" stroke="#4fb4bd"/><path d="M3 2l5 11 4-11" fill="none" stroke="#fffdf9" stroke-width="2.500"/></svg>
      <svg viewBox="0 0 16 16"><path d="M1 2h14v12H1z" fill="#4fb4bd"/><path d="M12 3h2v10h-4l2-4z" fill="#fffdf9"/></svg>
      <svg viewBox="0 0 16 16"><rect width="16" height="16" rx="4" fill="#cdb193"/><path d="M3 4h6l1 2 4 1-2 6H8L3 10z" fill="#fffdf9"/></svg>
      <svg viewBox="0 0 16 16"><rect x="2" width="12" height="16" rx="5" fill="#4fb4bd"/><path d="M5 5l6 6-3 2V3l3 2-6 6" fill="none" stroke="#fffdf9"/></svg>
      <svg viewBox="0 0 16 16"><path d="M1 6h4M2 9h5M8 4h6M8 11h6" stroke="#cdb193" stroke-dasharray="2 1"/><circle cx="11" cy="8" r="2" fill="none" stroke="#cdb193"/></svg>
      <svg viewBox="0 0 16 16"><path d="M4 0h12v16H0V9h4z" fill="#4fb4bd"/><circle cx="8" cy="8" r="6" fill="#fffdf9"/><path d="M8 2v6h6" fill="none" stroke="#4fb4bd"/><path d="M3 0v5" stroke="#fffdf9"/></svg>
      <svg viewBox="0 0 16 16"><path d="M2.500 2.500h12v12h-12zM2.500 10.500h12M5 7v3M7 7v3M9 7v3M11 7v3" fill="none" stroke="currentColor"/></svg>
    </div>
    <svg class="keyboard" width="24" height="14"><path d="M.5.500h23v13H.5z" fill="none" stroke="currentColor"/><path d="M3 4.500h18M3 7.500h18" stroke="currentColor" stroke-dasharray="1 1"/><path d="M3 10.500h2M7 10.500h10M19 10.500h2" stroke="currentColor"/></svg>
    <div class="lang">ENG</div>
    <svg class="bili" viewBox="0 0 90 64"><path d="M0 7h4l4 48H1L0 45zM10 20h3v10h-3zM15 20h3v10h-3zM10 33h7l1 26h-7zM20 5l10-5 1 38c16-4 29 1 29 9 0 8-15 15-33 15zM68 8l7-2 4 48-9 2zM59 22h5l5 35-6 2zM80 20h3v10h-3zM85 20h3v10h-3zM82 33h6l1 26h-6z" fill="url(#dither-bright)"/><path d="M38 45l11 6-10 5z" fill="#43393a"/></svg>
    <div class="clock"><span>19:24</span><span>星期二</span><span>2021/11/23</span></div>
    <svg class="notice" width="17" height="17"><path d="M5.500 12.500H.5V.5h15v9M5.500 12.500l3 3h3" fill="none" stroke="currentColor"/><circle cx="13" cy="13" r="3" fill="none" stroke="currentColor"/><path d="M11 15l4-4" stroke="currentColor"/></svg>
  </aside>
</div>
</body>
</html>
```
FILE: styles.css
```css
:root {
  --ink: #43393a;
  --paper: #fffdf9;
  --tan: #cdb193;
  --teal: #4fb4bd;
  --dots-x: repeating-linear-gradient(90deg, var(--tan) 0 1px, transparent 1px 2px);
  --dots-y: repeating-linear-gradient(180deg, var(--tan) 0 1px, transparent 1px 2px);
}
* { box-sizing: border-box; }
body { margin: 0; overflow: hidden; background: var(--ink); color: var(--ink); font: 12px/16px "Noto Sans", "Noto Sans CJK SC", sans-serif; }
ul, h1 { margin: 0; padding: 0; list-style: none; font-weight: normal; }
i { font-style: normal; }
svg { display: block; flex: none; }
span, b { white-space: nowrap; }
.defs { position: absolute; width: 0; height: 0; }
.dim { color: var(--tan); }

.desktop { display: flex; width: 1920px; height: 1080px; }
.screen { position: relative; display: flex; flex-direction: column; width: 1796px; height: 1080px; }

/* top menu bar */
.menubar { display: flex; align-items: center; height: 25px; padding-left: 23px; color: var(--paper); font-size: 12.5px; }
.apple { width: 13px; height: 16px; }
.app-name { width: 142px; margin-left: 22px; font-size: 12.5px; letter-spacing: -.05px; }
.app-menu { display: flex; gap: 25px; color: #eadbcb; }
.status { display: flex; align-items: center; flex: 1; height: 25px; margin-left: 619px; }
.status > * { flex: none; }
.s-speed { display: flex; flex-direction: column; width: 36px; margin-left: 29px; font-size: 9.5px; line-height: 10px; letter-spacing: -.15px; }
.s-mem { display: flex; flex-direction: column; margin-left: 16px; width: 8px; font-size: 6px; line-height: 6px; font-weight: bold; }
.s-level { margin-left: 5px; }
.s-bt { margin-left: 21px; }
.s-wifi { margin-left: 20px; }
.s-display { margin-left: 17px; }
.s-percent { width: 25px; margin-left: 17px; font-size: 10px; letter-spacing: -.2px; }
.s-plug { margin-left: 5px; }
.s-line { margin-left: 19px; }
.s-eject { margin-left: 17px; }
.s-input { width: 16px; height: 16px; margin-left: 19px; border-radius: 2px; background: var(--paper); color: var(--ink); font-size: 12px; line-height: 15px; text-align: center; }
.s-search { margin-left: 18px; }
.s-toggle { margin-left: 19px; }
.s-date { margin-left: 21px; color: #eadbcb; letter-spacing: .12px; }

/* application window */
.window { display: flex; flex-direction: column; flex: 1; border-left: 1px solid var(--ink); background: var(--paper); }
.titlebar { display: flex; align-items: center; height: 48px; padding-left: 16px; }
.app-icon { width: 17px; height: 16px; }
.back { width: 16px; height: 16px; margin-left: 21px; }
.doc-name { width: 677px; margin-left: 16px; word-spacing: .3px; }
.product { letter-spacing: .3px; }
.find { display: flex; align-items: center; gap: 13px; width: 897px; }
.find span { font-size: 12.5px; letter-spacing: .6px; }
.user { width: 52px; }
.avatar { width: 24px; height: 24px; }
.pen-tip { width: 18px; height: 18px; margin-left: 26px; }
.ribbon-tabs { display: flex; height: 31px; padding: 7px 0 0 17px; gap: 19px; font-size: 13px; }
.ribbon-tabs span:first-child { margin-right: 5px; }
.ribbon-tabs b { height: 20px; border-bottom: 2px solid var(--ink); }

/* ribbon */
.ribbon { display: flex; height: 102px; padding-left: 7px; background: var(--dots-x) 0 0/100% 1px no-repeat, var(--dots-x) 0 100%/100% 1px no-repeat; }
.group { display: flex; flex-direction: column; height: 100%; background: var(--dots-y) 100% 6px/1px 90px no-repeat; }
.group-body { display: flex; height: 82px; padding-top: 4px; }
.group-name { text-align: center; }
.g-tools { width: 679px; padding-left: 13px; }
.g-tools .group-name { padding-right: 10px; }
.g-shapes { width: 138px; padding-left: 10px; }
.g-shapes .group-name { padding-right: 14px; }
.g-edit { width: 201px; padding-left: 5px; }
.g-edit .group-name { padding-right: 7px; }
.g-convert { width: 136px; }
.tool { display: flex; flex-direction: column; align-items: center; height: 76px; padding-top: 3px; line-height: 15px; text-align: center; }
.tool > svg:first-child { width: 32px; height: 32px; }
.tool > span { margin-top: 3px; }
.tool > .mini { width: 8px; height: 6px; margin-top: 5px; }
.tool.selected { width: 42px; border: 1px solid var(--ink); border-radius: 4px; padding-top: 2px; }
.t-lasso { width: 57px; }
.t-hand { width: 53px; }
.t-eraser { width: 46px; }
.t-color { width: 76px; }
.gallery { display: flex; height: 62px; margin: 8px 0 0 3px; width: 386px; padding: 4px 0 0 3px; background: var(--dots-x) 0 0/100% 1px no-repeat, var(--dots-x) 0 100%/100% 1px no-repeat, var(--dots-y) 0 0/1px 100% no-repeat; }
.pens { display: grid; grid-template-columns: repeat(7, 47px); grid-auto-rows: 24px; gap: 6px; }
.pen { width: 47px; height: 24px; border: 1px solid var(--tan); color: var(--ink); }
.scroller { display: flex; flex-direction: column; align-items: center; justify-content: space-around; width: 14px; height: 60px; margin: -4px 0 0 4px; background: var(--dots-y) 0 0/1px 100% no-repeat, var(--dots-y) 100% 0/1px 100% no-repeat, var(--dots-x) 0 20px/100% 1px no-repeat, var(--dots-x) 0 40px/100% 1px no-repeat; }
.scroller svg { width: 8px; height: 6px; }
.scroller .m { height: 8px; }
.up { transform: scaleY(-1); }
.shape-box { display: flex; width: 118px; height: 63px; margin-top: 8px; background: var(--dots-x) 0 0/100% 1px no-repeat, var(--dots-x) 0 100%/100% 1px no-repeat, var(--dots-y) 0 0/1px 100% no-repeat; }
.shapes { width: 102px; height: 62px; overflow: visible; }
.axis { font: bold 7px/8px "Liberation Sans", sans-serif; }
.shape-box .scroller { margin: 1px 0 0 1px; }
.g-edit .tool:nth-child(1) { width: 57px; }
.g-edit .tool:nth-child(2) { width: 43px; }
.g-edit .tool:nth-child(3) { width: 45px; }
.g-edit .tool:nth-child(4) { width: 43px; }
.g-convert .tool:nth-child(1) { width: 67px; padding-left: 1px; }
.g-convert .tool:nth-child(2) { width: 58px; }
.g-convert svg { overflow: visible; }

/* notebook bar */
.notebook-bar { display: flex; align-items: flex-end; height: 49px; padding-left: 13px; border-bottom: 6px solid var(--tan); }
.nb-icon { width: 26px; height: 24px; margin-bottom: 2px; }
.nb-name { width: 122px; margin: 0 0 2px 6px; font-size: 19.5px; line-height: 26px; letter-spacing: .15px; }
.nb-arrow { width: 10px; height: 7px; margin: 0 0 10px 3px; }
.tabs { display: flex; align-items: flex-end; width: 1511px; margin-left: 14px; }
.tab { height: 21px; padding-left: 11px; line-height: 21px; white-space: nowrap; clip-path: polygon(0 100%, 2px 4px, 5px 0, calc(100% - 9px) 0, calc(100% - 5px) 4px, 100% 100%); }
.tab.active { height: 26px; padding-left: 12px; line-height: 27px; }
.tan { background: var(--tan); }
.pale { background: repeating-conic-gradient(var(--paper) 0 25%, var(--tan) 0 50%) 0 0/2px 2px; }
.teal { background: conic-gradient(from 270deg at 1px 1px, var(--tan) 90deg, var(--teal) 0) 0 0/2px 2px; }
.mix { background: conic-gradient(from 270deg at 1px 1px, var(--teal) 90deg, transparent 0) 0 0/3px 2px var(--tan); padding-left: 16px; }
.tab.open { clip-path: none; border: 1px solid var(--tan); border-bottom: 0; border-radius: 6px 8px 0 0; line-height: 20px; }
.tab.more { display: flex; align-items: center; gap: 8px; width: 57px; padding-left: 13px; border-style: dotted; border-left: 0; }
.more svg { width: 8px; height: 6px; }
.tab.plus { width: 36px; height: 19px; padding: 0; border-style: dotted; font-size: 15px; font-weight: bold; text-align: center; line-height: 18px; }
.w60 { width: 60px; } .w127 { width: 127px; } .w88 { width: 88px; } .w89 { width: 89px; } .w90 { width: 90px; } .w129 { width: 129px; }
.nb-search { flex: 1; height: 25px; margin-bottom: 3px; padding-left: 13px; border: 1px solid var(--tan); border-right: 0; line-height: 22px; white-space: nowrap; letter-spacing: .3px; }

/* page list */
.content { display: flex; flex: 1; }
.pages { width: 322px; border-right: 1px solid var(--tan); background: conic-gradient(from 270deg at 1px 1px, #dcc6ae 90deg, transparent 0) 0 0/4px 4px, conic-gradient(from 270deg at 1px 1px, #dcc6ae 90deg, transparent 0) 2px 2px/4px 4px; }
.add-page { display: flex; align-items: center; gap: 5px; height: 27px; padding: 0 0 6px 11px; background: var(--tan); }
.add-page svg { width: 16px; height: 16px; }
.pages ul { padding-top: 8px; }
.pages li { display: flex; align-items: center; height: 24px; padding-left: 52px; white-space: pre; }
.pages li.l1 { padding-left: 36px; }
.pages li.mixed { letter-spacing: .15px; }
.pages li.exercise { letter-spacing: .34px; }
.pages li.ch { height: 26px; padding-left: 20px; letter-spacing: .23px; }
.pages li.ch i { width: 12px; font-family: "DejaVu Sans", sans-serif; font-size: 11px; }
.pages li.first, .pages li.last { height: 28px; }
.pages li svg { width: 14px; height: 8px; margin-left: auto; margin-right: 6px; }
.pages li.current { margin: 0 -1px 0 6px; padding-left: 45px; border: 1px solid var(--tan); border-right: 0; background: var(--paper); color: #85725f; }

/* note page */
.page { position: relative; flex: 1; padding: 38px 0 0 56px; }
.page h1 { width: 450px; height: 68px; padding-left: 18px; border-bottom: 1px solid var(--tan); font-size: 41.700px; line-height: 59px; }
.stamp { display: flex; padding: 4px 0 0 19px; height: 111px; color: #a08870; font-size: 19px; line-height: 24px; letter-spacing: .1px; }
.date { width: 185px; padding-top: 5px; }
.time { letter-spacing: -.3px; }
.notes { padding-left: 19px; font-size: 23px; }
.notes li { display: flex; align-items: center; height: 39px; }
.notes li::before { content: ""; width: 8px; height: 8px; margin-right: 8px; border-radius: 50%; background: var(--ink); }
.latin { font-family: Lato, "Noto Sans", sans-serif; font-size: 21.500px; white-space: pre; }
.ink { position: absolute; left: 147px; top: 195px; width: 724px; height: 116px; }

/* network monitor widget */
.netmon { position: absolute; left: 1663px; top: 981px; display: flex; gap: 8px; }
.rates { display: flex; flex-direction: column; width: 40px; padding-top: 11px; color: #a08870; font-size: 9.500px; line-height: 13px; }
.rates span:first-child i { color: var(--teal); }
.load { position: relative; display: flex; align-items: center; justify-content: center; width: 48px; height: 48px; font-size: 23px; letter-spacing: -.8px; }
.load svg { position: absolute; inset: 0; }
.load small { font-size: 9px; }

/* dock */
.dock { position: absolute; left: 528px; top: 995px; display: flex; height: 81px; width: 872px; background: var(--dots-x) 16px 0/840px 1px no-repeat, var(--dots-x) 16px 100%/840px 1px no-repeat; }
.app { position: relative; display: flex; align-items: center; justify-content: center; width: 64px; height: 78px; }
.app.on::after { content: ""; position: absolute; left: 31px; top: 73px; width: 3px; height: 4px; border-radius: 1px; background: var(--ink); }
.divider { width: 1px; height: 63px; margin: 8px 14px 0 17px; background: var(--tan); }
.calendar { width: 52px; height: 52px; overflow: hidden; border-radius: 9px 9px 0 0; text-align: center; }
.calendar b { display: block; height: 16px; background: repeating-conic-gradient(var(--tan) 0 25%, #8a7769 0 50%) 0 0/2px 2px; color: var(--paper); font-size: 11px; font-weight: 500; line-height: 15px; }
.calendar span { font-size: 32px; line-height: 33px; font-weight: 300; }

/* right taskbar */
.taskbar { position: relative; display: flex; flex-direction: column; align-items: center; width: 124px; height: 1080px; color: var(--paper); background: linear-gradient(var(--tan), var(--tan)) 0 1075px/124px 1px no-repeat var(--ink); }
.launch { height: 163px; }
.sys { display: flex; align-items: center; justify-content: center; height: 40px; }
.task { position: relative; display: flex; align-items: center; justify-content: center; width: 124px; height: 47px; border: solid transparent; border-width: 1px 2px 1px 0; background-clip: padding-box; }
.ff { padding-bottom: 4px; }
.lit { background-image: conic-gradient(from 270deg at 1px 1px, var(--tan) 90deg, transparent 0), conic-gradient(from 270deg at 1px 1px, #7cb3ab 90deg, transparent 0); background-size: 3px 3px, 4px 4px; background-position: 0 0, 2px 1px; }
.hover { background-image: repeating-conic-gradient(var(--tan) 0 25%, var(--ink) 0 50%); background-size: 2px 2px; }
.run-teal { border-right-color: var(--teal); }
.run-tan { border-right-color: var(--tan); }
.run-mix { border-right-color: #a5b2a0; }
.badge { position: absolute; left: 65px; top: 18px; width: 17px; height: 17px; border: 1px dashed var(--tan); border-radius: 50%; background: var(--ink); font-size: 12px; line-height: 15px; text-align: center; }
.cursor { position: absolute; left: 79px; top: 461px; width: 18px; height: 31px; }
.power { display: flex; align-items: center; height: 22px; margin: 206px 0 0 2px; }
.battery { width: 42px; height: 22px; margin-left: 2px; border: 2px solid var(--paper); background: repeating-conic-gradient(var(--teal) 0 25%, var(--ink) 0 50%) 50% 50%/2px 2px content-box; padding: 2px; font-size: 12px; line-height: 14px; text-align: center; }
.power i { width: 3px; height: 10px; background: var(--paper); }
.tray { display: grid; grid-template-columns: repeat(5, 24px); grid-auto-rows: 24px; place-items: center; width: 120px; margin: 4px 0 0 5px; }
.tray svg { width: 16px; height: 16px; }
.keyboard { margin-top: 8px; }
.lang { margin-top: 17px; font-size: 12.500px; }
.clock { position: relative; display: flex; flex-direction: column; align-items: center; margin-top: 20px; font-size: 12.500px; line-height: 19.500px; }
.bili { position: absolute; left: 0; top: 980px; width: 90px; height: 64px; }
.notice { margin-top: 17px; }
```
